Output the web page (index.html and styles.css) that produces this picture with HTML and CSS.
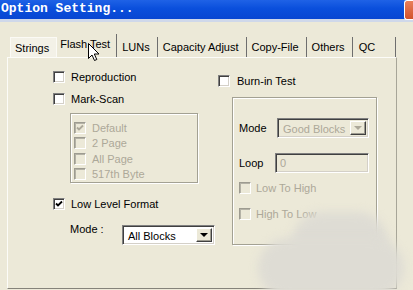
FILE: index.html
```html
<!DOCTYPE html>
<html lang="en">
<head>
    <meta charset="UTF-8">
    <title>Option Setting...</title>
    <link rel="stylesheet" href="styles.css">
</head>
<body>
    <div class="window">
        <!-- Title bar -->
        <div class="titlebar">
            <span class="title">Option Setting...</span>
            <span class="close"></span>
        </div>

        <!-- Tabs -->
        <div class="tabs">
            <span class="tab tab-first">Strings</span>
            <span class="tab tab-active">Flash Test</span>
            <span class="tab">LUNs</span>
            <span class="tab">Capacity Adjust</span>
            <span class="tab">Copy-File</span>
            <span class="tab">Others</span>
            <span class="tab tab-last">QC</span>
        </div>

        <!-- Flash Test page -->
        <div class="panel">
            <div class="col col-left">
                <div class="row"><span class="check"></span>Reproduction</div>
                <div class="row"><span class="check"></span>Mark-Scan</div>

                <div class="group group-scan">
                    <div class="row row-small off"><span class="check dis"><svg viewBox="0 0 8 8"><path d="M1 3.5 L3 5.5 L7 1.5"/></svg></span>Default</div>
                    <div class="row row-small off"><span class="check dis"></span>2 Page</div>
                    <div class="row row-small off"><span class="check dis"></span>All Page</div>
                    <div class="row row-small off"><span class="check dis"></span>517th Byte</div>
                </div>

                <div class="row row-format"><span class="check"><svg viewBox="0 0 8 8"><path d="M1 3.5 L3 5.5 L7 1.5"/></svg></span>Low Level Format</div>

                <div class="field field-mode">
                    <span class="field-label">Mode :</span>
                    <div class="select">
                        <span class="select-text">All Blocks</span>
                        <span class="select-btn"><i class="arrow"></i></span>
                    </div>
                </div>
            </div>

            <div class="col col-right">
                <div class="row row-burn"><span class="check"></span>Burn-in Test</div>

                <div class="group group-burn">
                    <div class="field">
                        <span class="field-label">Mode</span>
                        <div class="select select-dis">
                            <span class="select-text">Good Blocks</span>
                            <span class="select-btn"><i class="arrow"></i></span>
                        </div>
                    </div>
                    <div class="field field-loop">
                        <span class="field-label">Loop</span>
                        <div class="input input-dis">0</div>
                    </div>
                    <div class="row row-order off"><span class="check dis"></span>Low To High</div>
                    <div class="row row-order off"><span class="check dis"></span>High To Low</div>
                </div>
            </div>
        </div>

        <!-- blurred spot over the lower right corner -->
        <div class="smudge smudge-top"></div>
        <div class="smudge smudge-bottom"></div>

        <svg class="cursor" width="13" height="19" viewBox="0 0 13 19">
            <path d="M0.5 0.5 L0.5 15.5 L4 12 L6.5 17.5 L8.8 16.5 L6.3 11 L11 11 Z"/>
        </svg>
    </div>
</body>
</html>
```

FILE: styles.css
```css
body {
    margin: 0;
    font-family: 'Liberation Sans', Arial, sans-serif;
    font-size: 11px;
    color: #000000;
    background-color: #ece9d8;
}

.window {
    position: relative;
    width: 413px;
    height: 290px;
    overflow: hidden;
    background-color: #ece9d8;
}

/* Title bar */
.titlebar {
    height: 19px;
    display: flex;
    justify-content: space-between;
    align-items: flex-start;
    background: linear-gradient(#1f62e6, #0a4fdc 45%, #0846d2);
    border-bottom: 3px solid #cfd8ea;
}

.title {
    font-family: 'Liberation Mono', 'Courier New', monospace;
    font-weight: bold;
    font-size: 13px;
    line-height: 17px;
    color: #ffffff;
    padding-left: 1px;
}

.close {
    width: 8px;
    height: 18px;
    border: 1px solid #ffffff;
    border-right: none;
    border-radius: 3px 0 0 3px;
    background: linear-gradient(#e9805c, #d2522b);
}

/* Tabs */
.tabs {
    display: flex;
    align-items: flex-end;
    height: 20px;
    padding: 15px 0 0 10px;
}

.tab {
    height: 20px;
    line-height: 20px;
    padding: 0 7px 0 5px;
    border-right: 1px solid #6e6e6e;
    white-space: nowrap;
}

.tab-first {
    border: 1px solid #fbfaf5;
    border-bottom: none;
    background-color: #f3f1e7;
    height: 19px;
    padding: 0 7px 0 4px;
}

.tab-active {
    height: 23px;
    line-height: 20px;
    padding: 0 6px 0 3px;
}

.tab-last {
    min-width: 29px;
    padding-left: 6px;
}

/* Page */
.panel {
    display: flex;
    width: 388px;
    height: 230px;
    margin-left: 7px;
    border: 1px solid;
    border-color: #fcfcf8 #a7a598 #85837a #fcfcf8;
}

.col {
    display: flex;
    flex-direction: column;
}

.col-left {
    width: 165px;
    padding: 8px 0 0 45px;
}

.col-right {
    padding: 12px 0 0 0;
}

.row {
    display: flex;
    align-items: center;
    gap: 6px;
    height: 22px;
}

.row-small {
    height: 16px;
}

.off {
    color: #aca899;
}

.row-format {
    margin-top: 10px;
}

.row-burn {
    gap: 7px;
}

.row-order {
    margin-top: 4px;
    gap: 5px;
}

/* Checkbox */
.check {
    width: 12px;
    height: 12px;
    box-sizing: border-box;
    flex-shrink: 0;
    display: flex;
    align-items: center;
    justify-content: center;
    border: 1px solid;
    border-color: #808080 #ffffff #ffffff #808080;
    box-shadow: inset 1px 1px 0 #404040, inset -1px -1px 0 #d4d0c8;
    background-color: #ffffff;
}

.check svg {
    width: 8px;
    height: 8px;
    fill: none;
    stroke: #000000;
    stroke-width: 1.8;
}

.check.dis {
    background-color: #ece9d8;
    border-color: #9d9b90 #ffffff #ffffff #9d9b90;
    box-shadow: inset 1px 1px 0 #b4b2a6;
}

.check.dis svg {
    stroke: #aca899;
}

/* Group boxes */
.group {
    display: flex;
    flex-direction: column;
    border: 1px solid #a3a193;
    box-shadow: 1px 1px 0 #ffffff, inset 1px 1px 0 #ffffff;
}

.group-scan {
    width: 128px;
    height: 70px;
    box-sizing: border-box;
    margin: 3px 0 0 17px;
    padding: 6px 0 0 3px;
}

.group-burn {
    width: 145px;
    height: 148px;
    box-sizing: border-box;
    margin: 5px 0 0 14px;
    padding: 20px 0 0 6px;
}

/* Label + control */
.field {
    display: flex;
    align-items: center;
}

.field-label {
    width: 38px;
}

.field-mode {
    align-items: flex-start;
    margin: 8px 0 0 17px;
}

.field-mode .field-label {
    width: 52px;
    line-height: 13px;
}

.field-mode .select {
    margin-top: 2px;
    width: 93px;
}

.field-loop {
    margin-top: 15px;
}

.field-loop .field-label {
    width: 36px;
}

.select {
    display: flex;
    width: 92px;
    height: 20px;
    box-sizing: border-box;
    border: 1px solid;
    border-color: #808080 #ffffff #ffffff #808080;
    box-shadow: inset 1px 1px 0 #404040, inset -1px -1px 0 #d4d0c8;
    background-color: #ffffff;
    padding: 2px;
}

.select-text {
    flex: 1;
    line-height: 16px;
    padding-left: 3px;
}

.select-btn {
    width: 16px;
    display: flex;
    align-items: center;
    justify-content: center;
    box-sizing: border-box;
    background-color: #ece9d8;
    border: 1px solid;
    border-color: #ffffff #404040 #404040 #ffffff;
    box-shadow: inset -1px -1px 0 #9d9b90;
}

.arrow {
    width: 0;
    height: 0;
    border-left: 4px solid transparent;
    border-right: 4px solid transparent;
    border-top: 4px solid #000000;
}

.select-dis {
    background-color: #ece9d8;
    color: #aca899;
}

.select-dis .arrow {
    border-top-color: #aca899;
}

.input {
    width: 94px;
    height: 20px;
    box-sizing: border-box;
    border: 1px solid;
    border-color: #808080 #ffffff #ffffff #808080;
    box-shadow: inset 1px 1px 0 #404040, inset -1px -1px 0 #d4d0c8;
    line-height: 18px;
    padding-left: 4px;
}

.input-dis {
    background-color: #ece9d8;
    color: #aca899;
}

/* Overlays */
.smudge {
    position: absolute;
    background-color: #dedcd4;
    filter: blur(5px);
}

.smudge-top {
    left: 292px;
    top: 212px;
    width: 96px;
    height: 70px;
    border-radius: 30px;
}

.smudge-bottom {
    left: 258px;
    top: 238px;
    width: 146px;
    height: 60px;
    border-radius: 30px;
}

.cursor {
    position: absolute;
    left: 88px;
    top: 43px;
}

.cursor path {
    fill: #ffffff;
    stroke: #000000;
    stroke-width: 1;
}
```
